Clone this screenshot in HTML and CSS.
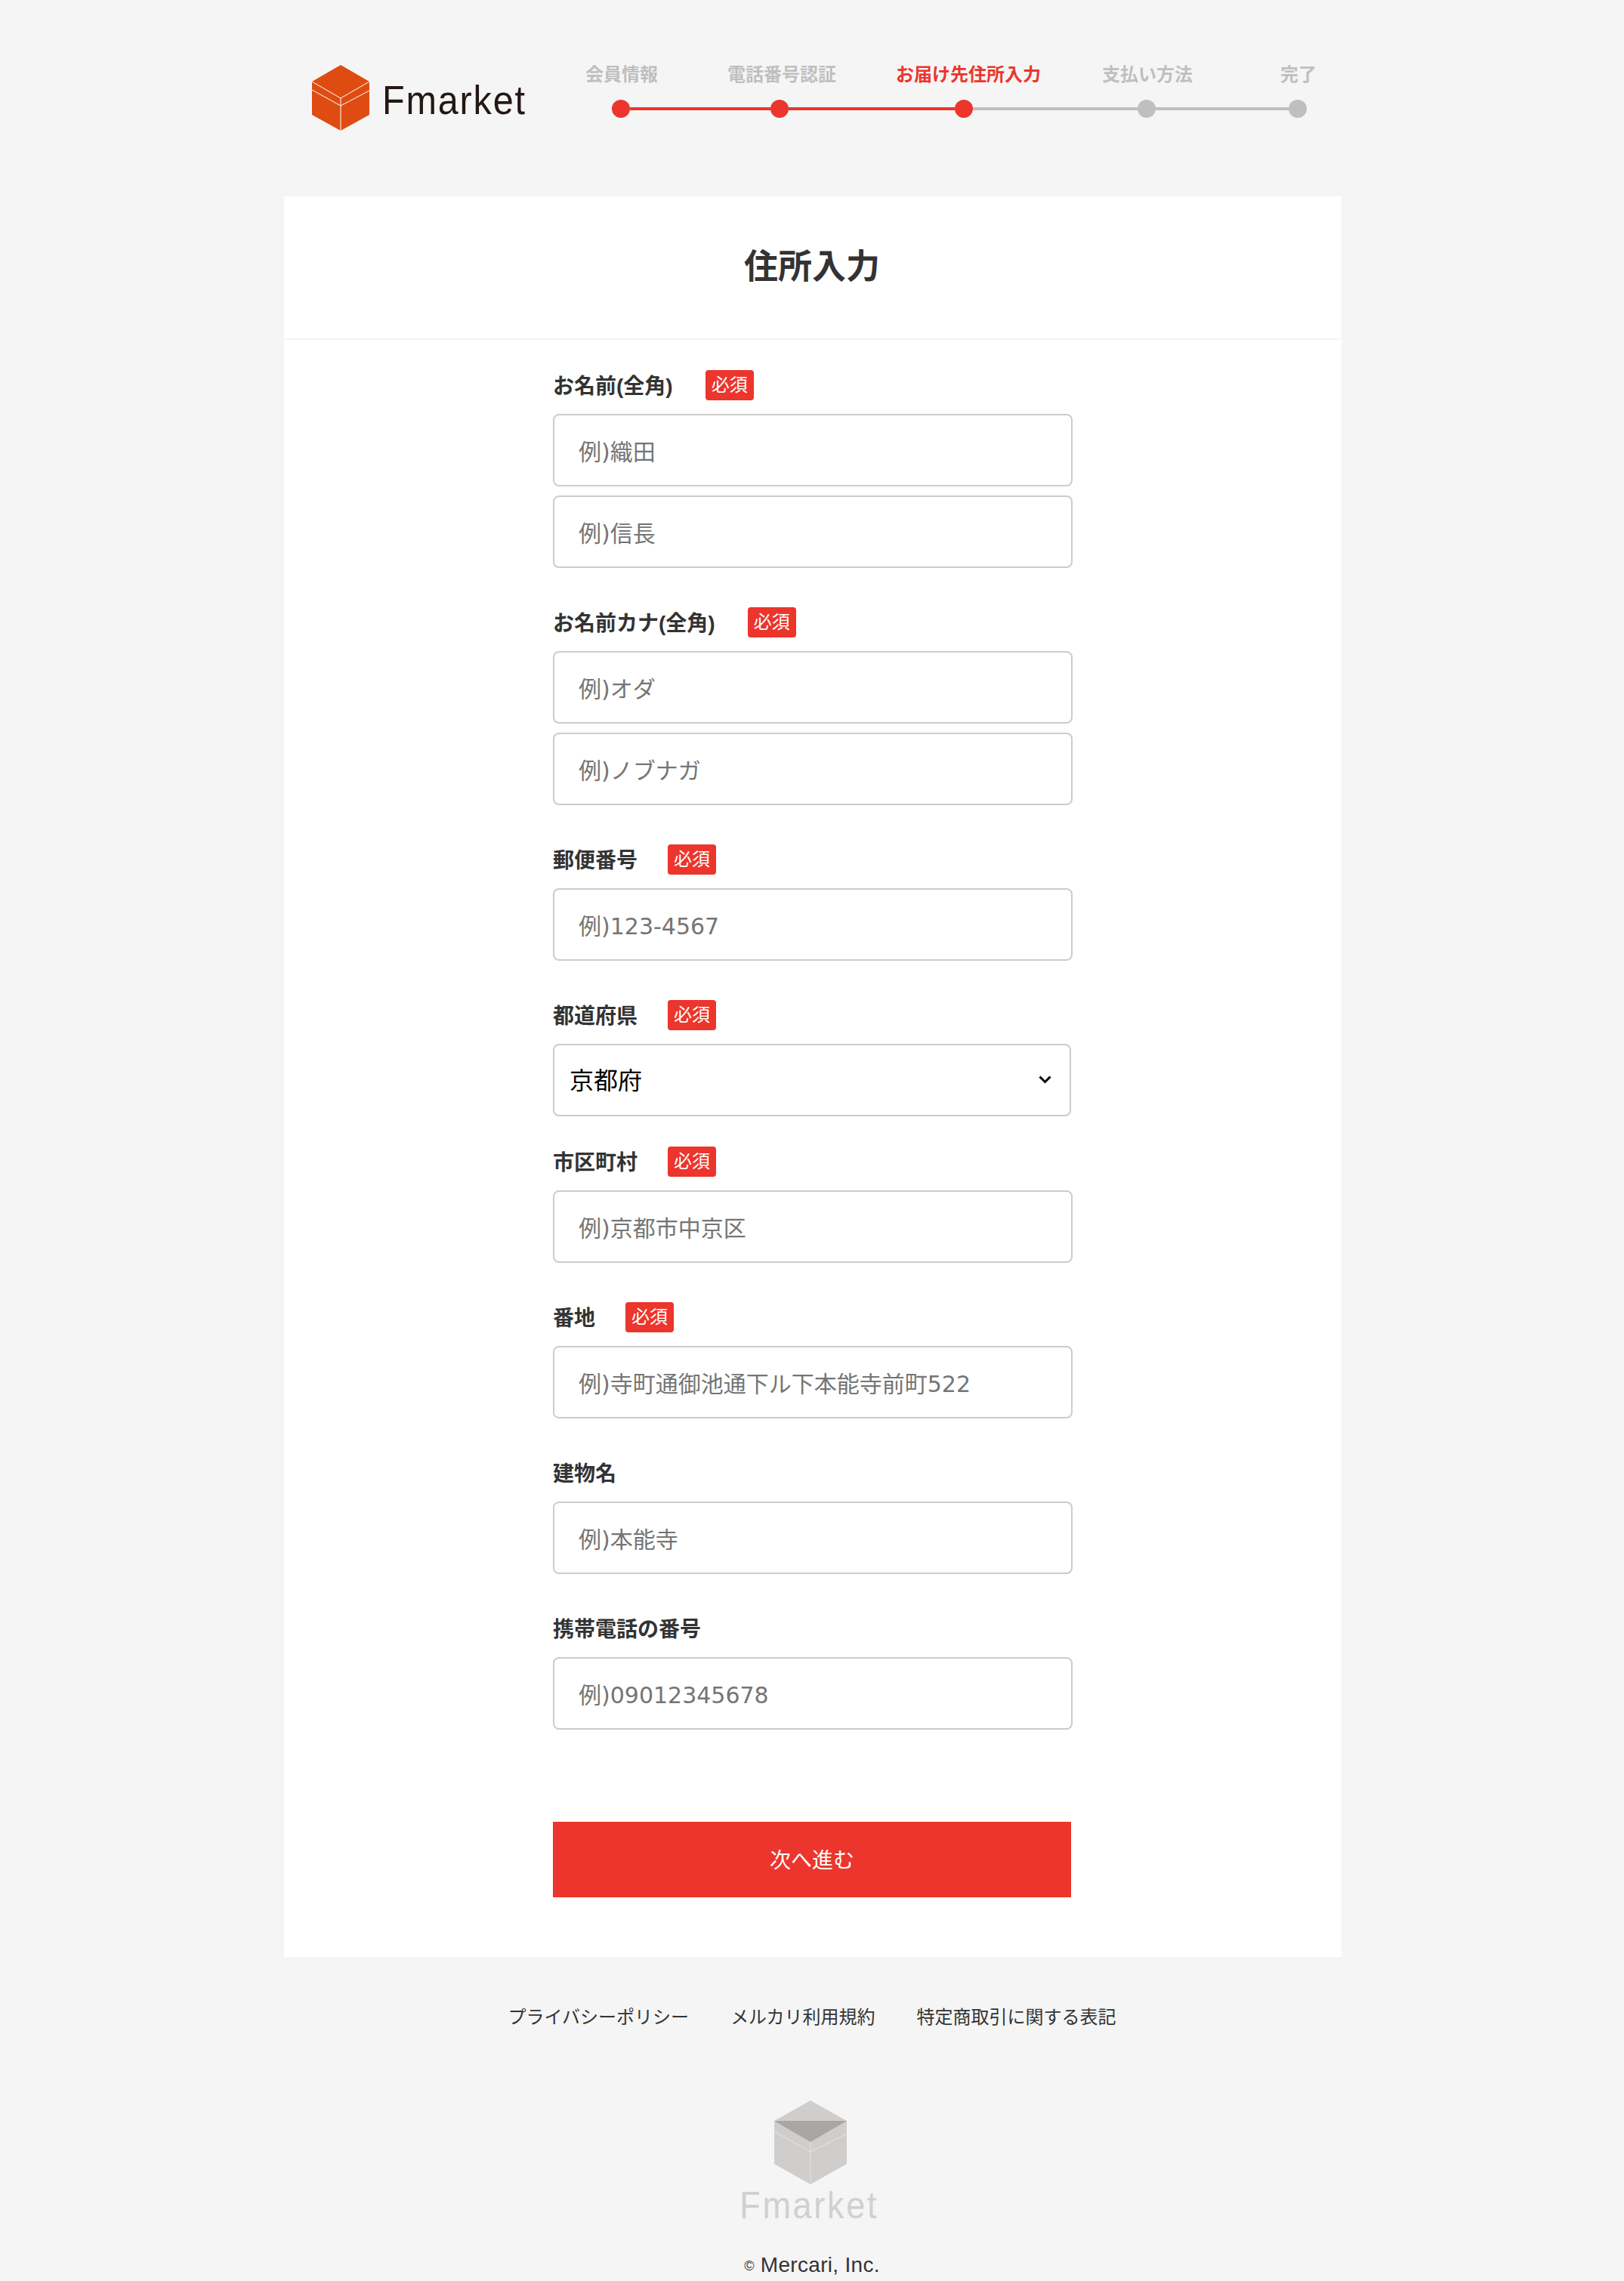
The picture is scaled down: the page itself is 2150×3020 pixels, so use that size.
FILE: index.html
```html
<!DOCTYPE html>
<html lang="ja">
  <head>
    <meta charset="utf-8">
    <title>住所入力</title>
    <link rel="stylesheet" href="styles.css">
  </head>
  <body>
    <header class="header">
      <div class="logo">
        <svg class="logo-icon" viewBox="0 0 76 87">
          <polygon points="38,0 76,22 76,66 38,87 0,66 0,22" fill="#df4c11"/>
          <path d="M0 22 38 44 76 22M0 33 38 54 76 34M38 44V87" fill="none" stroke="#fff" stroke-width="1"/>
        </svg>
        <span class="logo-text">Fmarket</span>
      </div>
      <div class="steps">
        <div class="step-labels">
          <span class="step-label">会員情報</span>
          <span class="step-label">電話番号認証</span>
          <span class="step-label active">お届け先住所入力</span>
          <span class="step-label">支払い方法</span>
          <span class="step-label">完了</span>
        </div>
        <div class="step-track">
          <span class="dot active"></span>
          <span class="line active"></span>
          <span class="dot active"></span>
          <span class="line active"></span>
          <span class="dot active"></span>
          <span class="line"></span>
          <span class="dot"></span>
          <span class="line"></span>
          <span class="dot"></span>
        </div>
      </div>
    </header>

    <main class="card">
      <h1 class="card-title">住所入力</h1>
      <form class="form">
        <div class="group">
          <div class="group-label"><label>お名前(全角)</label><span class="required required-wide">必須</span></div>
          <input type="text" class="field" placeholder="例)織田">
          <input type="text" class="field" placeholder="例)信長">
        </div>
        <div class="group">
          <div class="group-label"><label>お名前カナ(全角)</label><span class="required required-wide">必須</span></div>
          <input type="text" class="field" placeholder="例)オダ">
          <input type="text" class="field" placeholder="例)ノブナガ">
        </div>
        <div class="group">
          <div class="group-label"><label>郵便番号</label><span class="required">必須</span></div>
          <input type="text" class="field" placeholder="例)123-4567">
        </div>
        <div class="group group-select">
          <div class="group-label"><label>都道府県</label><span class="required">必須</span></div>
          <div class="select-wrap">
            <select class="select">
              <option>京都府</option>
            </select>
            <svg class="select-arrow" viewBox="0 0 17 11">
              <path d="M1.5 1.5 8.5 8.5 15.5 1.5" fill="none" stroke="#000" stroke-width="3"/>
            </svg>
          </div>
        </div>
        <div class="group">
          <div class="group-label"><label>市区町村</label><span class="required">必須</span></div>
          <input type="text" class="field" placeholder="例)京都市中京区">
        </div>
        <div class="group">
          <div class="group-label"><label>番地</label><span class="required">必須</span></div>
          <input type="text" class="field" placeholder="例)寺町通御池通下ル下本能寺前町522">
        </div>
        <div class="group">
          <div class="group-label"><label>建物名</label></div>
          <input type="text" class="field" placeholder="例)本能寺">
        </div>
        <div class="group group-last">
          <div class="group-label"><label>携帯電話の番号</label></div>
          <input type="text" class="field" placeholder="例)09012345678">
        </div>
        <button type="button" class="submit">次へ進む</button>
      </form>
    </main>

    <footer class="footer">
      <nav class="footer-links">
        <a href="#">プライバシーポリシー</a>
        <a href="#">メルカリ利用規約</a>
        <a href="#">特定商取引に関する表記</a>
      </nav>
      <svg class="footer-icon" viewBox="0 0 96 111">
        <polygon points="48,0 96,27 96,84 48,111 0,84 0,27" fill="#cfcecd"/>
        <polygon points="0,27 96,27 48,55" fill="#aaa6a4"/>
        <path d="M0 41 48 68 96 44M48 55V111" fill="none" stroke="#dddcdb" stroke-width="1.5"/>
      </svg>
      <div class="footer-name">Fmarket</div>
      <div class="copyright"><span class="copyright-mark">©</span> Mercari, Inc.</div>
    </footer>
  </body>
</html>
```

FILE: styles.css
```css
* {
  box-sizing: border-box;
}

html, body {
  margin: 0;
  padding: 0;
}

body {
  height: 3020px;
  overflow: hidden;
  background-color: #f5f5f5;
  color: #333;
  font-family: "Liberation Sans", "Noto Sans CJK JP", sans-serif;
}

/* ヘッダー */
.header {
  display: flex;
  width: 1400px;
  height: 260px;
  margin: 0 auto;
  padding: 86px 0 0 38px;
}

.logo {
  display: flex;
  align-items: flex-start;
  width: 362px;
}

.logo-icon {
  width: 76px;
  height: 87px;
}

.logo-text {
  margin: 16px 0 0 17px;
  color: #231815;
  font-size: 54px;
  line-height: 60px;
  letter-spacing: 2px;
  transform: scaleX(0.9);
  transform-origin: left center;
}

/* ステップ */
.step-labels {
  display: flex;
  height: 24px;
}

.step-label {
  color: #bfbfbf;
  font-size: 24px;
  font-weight: bold;
  line-height: 26px;
  white-space: nowrap;
}

.step-label.active {
  color: #ec352c;
}

.step-label:nth-child(2) {
  margin-left: 92px;
}

.step-label:nth-child(3) {
  margin-left: 79px;
}

.step-label:nth-child(4) {
  margin-left: 81px;
}

.step-label:nth-child(5) {
  margin-left: 116px;
}

.step-track {
  display: flex;
  align-items: center;
  margin: 22px 0 0 35px;
}

.dot {
  flex: none;
  width: 24px;
  height: 24px;
  border-radius: 50%;
  background-color: #bfbfbf;
}

.dot.active {
  background-color: #ec352c;
}

.line {
  flex: none;
  height: 4px;
  background-color: #bfbfbf;
}

.line.active {
  background-color: #ec352c;
}

.line:nth-child(2) {
  width: 186px;
}

.line:nth-child(4) {
  width: 220px;
}

.line:nth-child(6) {
  width: 218px;
}

.line:nth-child(8) {
  width: 176px;
}

/* カード */
.card {
  width: 1400px;
  height: 2331px;
  margin: 0 0 0 376px;
  background-color: #fff;
}

.card-title {
  height: 190px;
  margin: 0;
  border-bottom: 2px solid #f5f5f5;
  padding-right: 2px;
  font-size: 45px;
  line-height: 188px;
  text-align: center;
}

.form {
  width: 688px;
  margin-left: 356px;
  padding-top: 40px;
}

.group {
  margin-bottom: 52px;
}

.group-select {
  margin-bottom: 40px;
}

.group-last {
  margin-bottom: 122px;
}

.group-label {
  display: flex;
  align-items: center;
  height: 40px;
  margin-bottom: 18px;
  font-size: 28px;
  font-weight: bold;
}

.group-label label {
  padding-bottom: 3px;
}

.required {
  width: 64px;
  height: 40px;
  margin-left: 40px;
  border-radius: 4px;
  background-color: #ec352c;
  color: #fff;
  font-size: 24px;
  font-weight: normal;
  line-height: 40px;
  text-align: center;
}

.required-wide {
  margin-left: 43px;
}

/* 入力フォーム */
.field {
  display: block;
  width: 688px;
  height: 96px;
  padding: 4px 32px 0;
  border: 2px solid #ccc;
  border-radius: 8px;
  background-color: #fff;
  font-family: "DejaVu Sans", "Noto Sans CJK JP", sans-serif;
  font-size: 30px;
}

.field + .field {
  margin-top: 12px;
}

.field::placeholder {
  color: #757575;
  opacity: 1;
}

.select-wrap {
  position: relative;
  width: 686px;
}

.select {
  display: block;
  width: 100%;
  height: 96px;
  padding: 0 20px 5px;
  border: 2px solid #ccc;
  border-radius: 8px;
  background-color: #fff;
  color: #000;
  font-family: "Noto Sans CJK JP", sans-serif;
  font-size: 32px;
  appearance: none;
}

.select-arrow {
  position: absolute;
  top: 42px;
  right: 26px;
  width: 17px;
  height: 11px;
}

.submit {
  display: block;
  width: 686px;
  height: 100px;
  padding: 0 0 3px;
  border: none;
  background-color: #ec352c;
  color: #fff;
  font-family: inherit;
  font-size: 28px;
}

/* フッター */
.footer {
  display: flex;
  flex-direction: column;
  align-items: center;
  padding-top: 62px;
}

.footer-links {
  display: flex;
  gap: 55px;
  height: 36px;
}

.footer-links a {
  color: #333;
  font-size: 24px;
  line-height: 36px;
  text-decoration: none;
}

.footer-icon {
  width: 96px;
  height: 111px;
  margin: 92px 4px 0 0;
}

.footer-name {
  margin: -2px 8px 0 0;
  color: #d1d0cf;
  font-size: 50px;
  line-height: 60px;
  letter-spacing: 3px;
  transform: scaleX(0.9);
}

.copyright {
  margin-top: 31px;
  font-size: 28px;
  line-height: 36px;
  letter-spacing: 0.3px;
}

.copyright-mark {
  font-size: 18px;
  vertical-align: 2px;
}
```
